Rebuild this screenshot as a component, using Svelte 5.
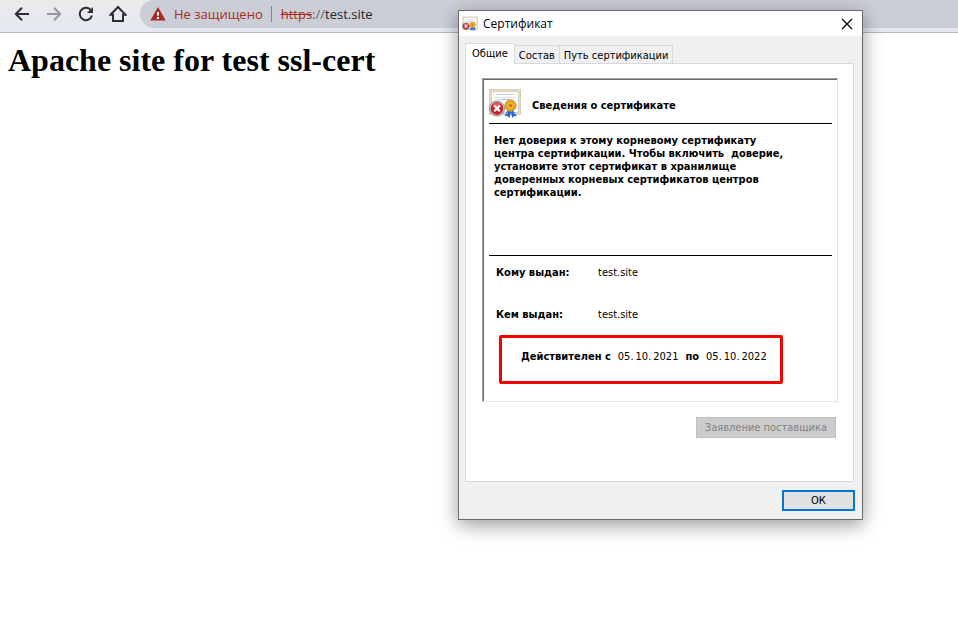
<script>
  const tabs = ['Общие', 'Состав', 'Путь сертификации'];
  let active = $state(0);

  const message = [
    'Нет доверия к этому корневому сертификату',
    'центра сертификации. Чтобы включить  доверие,',
    'установите этот сертификат в хранилище',
    'доверенных корневых сертификатов центров',
    'сертификации.'
  ].join('\n');

  const parties = [
    { label: 'Кому выдан:', value: 'test.site' },
    { label: 'Кем выдан:', value: 'test.site' }
  ];
</script>

{#snippet certificate(size)}
  <svg width={size} height={size} viewBox="0 0 32 32" aria-hidden="true">
    <rect x="0.5" y="1.5" width="31" height="25" fill="#e4dac6" stroke="#c9bda5" stroke-dasharray="2 1" />
    <rect x="2.5" y="3.5" width="27" height="21" fill="#fdfdfb" stroke="#d8d0c0" />
    <path d="M7 6.500h18" stroke="#c3cbdf" />
    <path d="M5 9.500h22M8 11.500h16" stroke="#d9dfeb" />
    <path d="M12 11.500h8" stroke="#a9b4d2" />
    <path d="M19 21l-3.500 7 3 0 2 2 2-7zM23 21l5 7-3 0-1.500 2-2-7z" fill="#2464cf" />
    <path d="M19.500 22l-2 5M24 22l2 5" stroke="#67a2f4" />
    <circle cx="21.500" cy="17.500" r="5.600" fill="#e6a31c" stroke="#c98a16" stroke-width="0.8" />
    <circle cx="21.500" cy="17.500" r="2.600" fill="#c98516" stroke="#f8cd58" />
    <circle cx="8" cy="20.500" r="7.500" fill="#dcdcdc" stroke="#8a8a8a" />
    <circle cx="8" cy="20.500" r="6" fill="#c51f29" stroke="#98151d" stroke-width="0.6" />
    <path d="M3.200 18a5.400 5.400 0 0 1 9.600 0q-4.800 2-9.600 0z" fill="#df6268" />
    <path d="M5.200 17.700l5.600 5.600M10.800 17.700l-5.600 5.600" stroke="#fff" stroke-width="2.2" />
  </svg>
{/snippet}

<header class="toolbar">
  <nav class="nav">
    <button aria-label="Назад">
      <svg width="16" height="16" viewBox="0 0 16 16"><path d="M15 8H2M8 1.8L1.8 8 8 14.2" /></svg>
    </button>
    <button aria-label="Вперёд" class="dim">
      <svg width="16" height="16" viewBox="0 0 16 16"><path d="M1 8h13M8 1.8L14.2 8 8 14.2" /></svg>
    </button>
    <button aria-label="Обновить">
      <svg width="16" height="16" viewBox="0 0 16 16"><path d="M13.3 4.8A6.2 6.2 0 1 0 14 9.5" /><path d="M15 1v6H9z" class="solid" /></svg>
    </button>
    <button aria-label="Домой">
      <svg width="18" height="18" viewBox="0 0 18 18"><path d="M1.5 9.8L9 2l7.500 7.800H14V16H4V9.800z" /></svg>
    </button>
  </nav>
  <div class="address">
    <svg width="16" height="14" viewBox="0 0 16 14" aria-hidden="true">
      <path d="M8 0l7.700 13.500H.3z" fill="#a52c24" />
      <path d="M8 5v3.500M8 10v2" stroke="#fff" stroke-width="2" />
    </svg>
    <span class="warning">Не защищено</span>
    <span class="rule"></span>
    <span class="url"><s>https</s><span class="slashes">://</span>test.site</span>
  </div>
</header>

<main>
  <h1>Apache site for test ssl-cert</h1>
</main>

<div class="dialog" role="dialog" aria-labelledby="dialog-title">
  <div class="titlebar">
    {@render certificate(16)}
    <span id="dialog-title">Сертификат</span>
    <button class="close" aria-label="Закрыть">
      <svg width="12" height="12" viewBox="0 0 12 12"><path d="M1 1l10 10M11 1L1 11" stroke="#000" stroke-width="1.2" /></svg>
    </button>
  </div>

  <div class="content">
    <div class="tabs" role="tablist">
      {#each tabs as tab, i}
        <button role="tab" aria-selected={active === i} class:active={active === i} onclick={() => (active = i)}>{tab}</button>
      {/each}
    </div>

    <section class="panel" role="tabpanel">
      <div class="sheet">
        <div class="heading">
          {@render certificate(32)}
          <strong>Сведения о сертификате</strong>
        </div>
        <p class="message">{message}</p>
        <dl>
          {#each parties as party}
            <div class="party"><dt>{party.label}</dt><dd>{party.value}</dd></div>
          {/each}
        </dl>
        <div class="validity">
          <b>Действителен с</b><span>05.&thinsp;10.&thinsp;2021</span><b>по</b><span>05.&thinsp;10.&thinsp;2022</span>
        </div>
      </div>
      <button class="statement" disabled>Заявление поставщика</button>
    </section>

    <button class="ok">ОК</button>
  </div>
</div>

<style>
  :global(body) {
    margin: 0;
    background: #fff;
  }

  button {
    margin: 0;
    padding: 0;
    border: 0;
    background: none;
    font: inherit;
    color: inherit;
  }

  svg {
    display: block;
    flex: none;
  }

  .toolbar {
    display: flex;
    height: 32px;
    border-bottom: 1px solid #b3b7c0;
    background: linear-gradient(#ebebec, #e5e8f1);
  }

  .nav {
    display: flex;
    height: 28px;
    padding: 0 6px;
  }

  .nav button {
    display: flex;
    align-items: center;
    justify-content: center;
    width: 32px;
  }

  .nav path {
    fill: none;
    stroke: #2d2e31;
    stroke-width: 2;
  }

  .nav .dim path {
    stroke: #98999d;
  }

  .nav .solid {
    fill: #2d2e31;
    stroke: none;
  }

  .address {
    display: flex;
    flex: 1;
    align-items: center;
    height: 28px;
    padding-left: 10px;
    border-radius: 14px 0 0 14px;
    background: #cbced7;
    color: #24262a;
    font: 13px/20px "Open Sans", sans-serif;
  }

  .warning {
    margin-left: 8px;
    color: #a52c24;
  }

  .rule {
    width: 1px;
    height: 16px;
    margin: 0 9px 0 8px;
    background: #85878d;
  }

  s {
    color: #a52c24;
  }

  .slashes {
    color: #5d6066;
  }

  main {
    padding: 8px;
  }

  h1 {
    margin: 0;
    color: #000;
    font: bold 32px/38px "Liberation Serif", serif;
  }

  .dialog {
    position: absolute;
    top: 10px;
    left: 458px;
    box-sizing: border-box;
    width: 405px;
    border: 1px solid #6b6b6e;
    background: #f0f0f0;
    box-shadow: 0 5px 18px rgba(0, 0, 0, 0.4);
    color: #000;
    font: 11px/13px "DejaVu Sans Condensed", "DejaVu Sans", sans-serif;
  }

  .titlebar {
    display: flex;
    align-items: center;
    height: 25px;
    padding-left: 3px;
    background: #fff;
    font: 12px/16px "Open Sans", sans-serif;
  }

  #dialog-title {
    flex: 1;
    margin-left: 5px;
  }

  .close {
    display: flex;
    align-items: center;
    justify-content: center;
    width: 30px;
    height: 24px;
  }

  .content {
    display: flex;
    flex-direction: column;
    padding: 7px 8px 8px 6px;
  }

  .tabs {
    display: flex;
    align-items: flex-end;
    height: 20px;
  }

  .tabs button {
    height: 18px;
    padding: 2px 4px 0;
    border: 1px solid #d9d9d9;
    border-bottom: 0;
    border-left: 0;
    white-space: nowrap;
  }

  .tabs .active {
    position: relative;
    height: 21px;
    margin-bottom: -1px;
    padding: 0 6px 2px;
    border-left: 1px solid #d9d9d9;
    background: #fff;
  }

  .panel {
    display: flex;
    flex-direction: column;
    padding: 14px 15px 43px 16px;
    border: 1px solid #d9d9d9;
    background: #fff;
  }

  .sheet {
    padding: 0 5px 17px 6px;
    border: 1px solid #e3e3e3;
    border-top-color: #a0a0a0;
    border-left-color: #a0a0a0;
    box-shadow: inset 1px 1px #696969;
  }

  .heading {
    display: flex;
    align-items: center;
    gap: 11px;
    height: 39px;
    padding-top: 5px;
    border-bottom: 1px solid #000;
  }

  .heading strong {
    padding-top: 4px;
  }

  .message {
    min-height: 121px;
    margin: 0;
    padding: 10px 0 0 5px;
    border-bottom: 1px solid #000;
    font-weight: bold;
    white-space: pre;
  }

  dl {
    display: flex;
    flex-direction: column;
    gap: 29px;
    margin: 0;
    padding: 10px 7px 14px;
  }

  .party {
    display: flex;
  }

  dt {
    width: 102px;
    font-weight: bold;
  }

  dd {
    margin: 0;
  }

  .validity {
    display: flex;
    gap: 7px;
    margin: 0 49px 0 10px;
    padding: 12px 0 18px 19px;
    border: 3px solid #f60000;
    border-radius: 2px;
    white-space: nowrap;
  }

  .statement {
    align-self: flex-end;
    height: 21px;
    margin: 15px 2px 0 0;
    padding: 0 8px;
    border: 1px solid #bfbfbf;
    background: #ccc;
    color: #838383;
  }

  .ok {
    align-self: flex-end;
    width: 73px;
    height: 21px;
    margin: 8px -1px 0 0;
    border: 2px solid #0078d7;
    background: #e1e1e1;
  }
</style>
